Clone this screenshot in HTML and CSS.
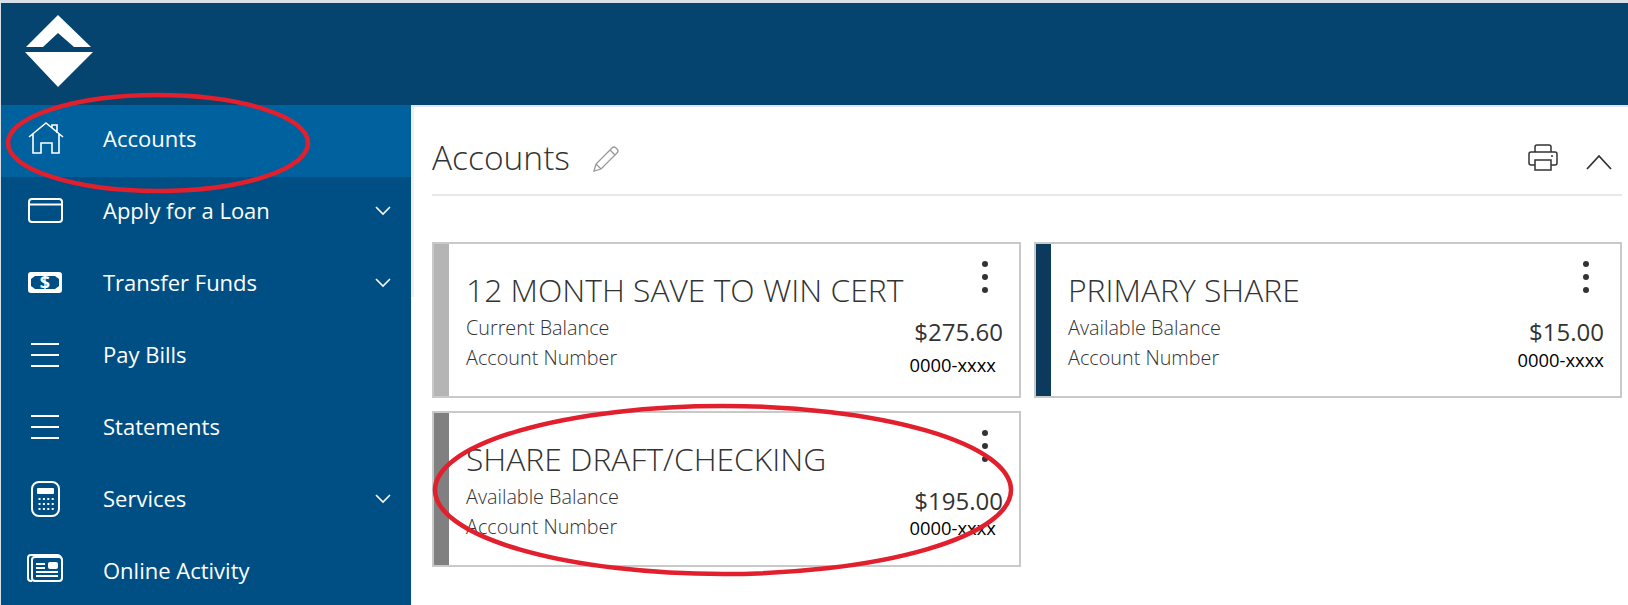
FILE: index.html
```html
<!DOCTYPE html>
<html lang="en">
  <head>
    <meta charset="UTF-8" />
    <title>Accounts</title>
    <link rel="stylesheet" href="styles.css">
  </head>
  <body>
    <header class="topbar">
      <svg class="logo" width="70" height="76" viewBox="0 0 70 76">
        <path fill="#fff" d="M33 0 L66 32 L49 32 L33 18 L18 32 L1 32 Z" />
        <path fill="#fff" d="M0 37 L68 37 L33 72 Z" />
      </svg>
    </header>

    <div class="layout">
      <nav class="sidebar">
        <a href="#" class="nav-item active">
          <svg class="nav-icon thin" viewBox="0 0 38 38"><path d="M2 17 L19 3 L36 17 M25 8 V5 H30 V13 M6 14 V33 H14 V23 H25 V33 H32 V14" /></svg>
          <span class="nav-label">Accounts</span>
        </a>
        <a href="#" class="nav-item">
          <svg class="nav-icon" viewBox="0 0 38 38"><rect x="2" y="7" width="33" height="23" rx="3" /><path d="M2 12.5 H35" /></svg>
          <span class="nav-label">Apply for a Loan</span>
          <svg class="chevron" viewBox="0 0 18 12"><path d="M2 2 L9 9 L16 2" /></svg>
        </a>
        <a href="#" class="nav-item">
          <svg class="nav-icon" viewBox="0 0 38 38"><rect class="solid" x="1" y="8" width="34" height="21" rx="3" /><path class="cutout" d="M8 12 H28 L32 15 V22 L28 25 H8 L4 22 V15 Z" /><text class="money" x="18" y="24.5" text-anchor="middle">$</text></svg>
          <span class="nav-label">Transfer Funds</span>
          <svg class="chevron" viewBox="0 0 18 12"><path d="M2 2 L9 9 L16 2" /></svg>
        </a>
        <a href="#" class="nav-item">
          <svg class="nav-icon" viewBox="0 0 38 38"><path d="M4 8 H32 M4 19 H32 M4 30 H32" /></svg>
          <span class="nav-label">Pay Bills</span>
        </a>
        <a href="#" class="nav-item">
          <svg class="nav-icon" viewBox="0 0 38 38"><path d="M4 8 H32 M4 19 H32 M4 30 H32" /></svg>
          <span class="nav-label">Statements</span>
        </a>
        <a href="#" class="nav-item">
          <svg class="nav-icon" viewBox="0 0 38 38"><rect x="5" y="2" width="27" height="34" rx="7" /><rect class="solid" x="10" y="8" width="17" height="6" rx="1" /><path class="keys" d="M11.5 19 H27 M11.5 24 H27 M11.5 29 H27" /></svg>
          <span class="nav-label">Services</span>
          <svg class="chevron" viewBox="0 0 18 12"><path d="M2 2 L9 9 L16 2" /></svg>
        </a>
        <a href="#" class="nav-item">
          <svg class="nav-icon" viewBox="0 0 38 38"><rect x="5" y="5" width="30" height="24" rx="3" /><path d="M5 29 H4 A3 3 0 0 1 1 26 V6 A3 3 0 0 1 4 3 H30 A4 4 0 0 1 34 6 M9 12 H18 M9 16 H18 M9 20 H31 M9 24 H31" /><rect class="solid" x="21" y="10" width="10" height="7" rx="2" /></svg>
          <span class="nav-label">Online Activity</span>
        </a>
      </nav>

      <main class="content">
        <div class="page-head">
          <h1>Accounts</h1>
          <svg class="pencil" width="28" height="28" viewBox="0 0 28 28"><path d="M2 26 L4 19 L20 3 Q22 1 24 3 L25 4 Q27 6 25 8 L9 24 Z M4 19 L9 24 M18 5 L23 10" /></svg>
          <div class="head-actions">
            <svg class="print" width="30" height="28" viewBox="0 0 30 28"><path d="M7 8 V3 A2 2 0 0 1 9 1 H21 A2 2 0 0 1 23 3 V8 M7 21 H3 A2 2 0 0 1 1 19 V10 A2 2 0 0 1 3 8 H27 A2 2 0 0 1 29 10 V19 A2 2 0 0 1 27 21 H23 M7 16 H23 V26 H7 Z" /><circle cx="24" cy="12" r="1" /></svg>
            <svg class="collapse" width="26" height="16" viewBox="0 0 26 16"><path d="M1 15 L13 2 L25 15" /></svg>
          </div>
        </div>

        <div class="cards">
          <article class="card">
            <div class="card-bar bar-light"></div>
            <div class="card-body">
              <div class="card-info">
                <h2>12 MONTH SAVE TO WIN CERT</h2>
                <p>Current Balance</p>
                <p>Account Number</p>
              </div>
              <div class="card-side">
                <div class="dots"><i></i><i></i><i></i></div>
                <div class="amount">$275.60</div>
                <div class="acct-no inset low">0000-xxxx</div>
              </div>
            </div>
          </article>

          <article class="card">
            <div class="card-bar bar-navy"></div>
            <div class="card-body">
              <div class="card-info">
                <h2>PRIMARY SHARE</h2>
                <p>Available Balance</p>
                <p>Account Number</p>
              </div>
              <div class="card-side">
                <div class="dots"><i></i><i></i><i></i></div>
                <div class="amount">$15.00</div>
                <div class="acct-no">0000-xxxx</div>
              </div>
            </div>
          </article>

          <article class="card">
            <div class="card-bar bar-grey"></div>
            <div class="card-body">
              <div class="card-info">
                <h2>SHARE DRAFT/CHECKING</h2>
                <p>Available Balance</p>
                <p>Account Number</p>
              </div>
              <div class="card-side">
                <div class="dots"><i></i><i></i><i></i></div>
                <div class="amount">$195.00</div>
                <div class="acct-no inset">0000-xxxx</div>
              </div>
            </div>
          </article>
        </div>
      </main>
    </div>

    <svg class="marks" width="1628" height="605" viewBox="0 0 1628 605">
      <ellipse cx="158" cy="143" rx="150" ry="48" />
      <ellipse cx="723" cy="490" rx="288" ry="84" />
    </svg>
  </body>
</html>
```

FILE: styles.css
```css
* {
  margin: 0;
  padding: 0;
  box-sizing: border-box;
  font-family: "Open Sans", "Liberation Sans", sans-serif;
}

html, body {
  height: 605px;
  overflow: hidden;
}

body {
  position: relative;
  background-color: #fff;
  border-top: 3px solid #d7e0e8;
  border-left: 1px solid #d7e0e8;
  color: #333;
}

.topbar {
  height: 102px;
  background-color: #04446e;
  padding: 12px 0 0 24px;
}

.logo {
  display: block;
}

.layout {
  display: flex;
  height: 500px;
}

.sidebar {
  width: 410px;
  flex-shrink: 0;
  background-color: #004f84;
}

.nav-item {
  display: flex;
  align-items: center;
  height: 72px;
  padding: 0 19px 4px 26px;
  color: white;
  text-decoration: none;
  font-size: 22px;
}

.nav-item.active {
  background-color: #00619f;
}

.nav-icon {
  width: 38px;
  height: 38px;
  margin-right: 38px;
  fill: none;
  stroke: white;
  stroke-width: 2;
}

.nav-icon.thin {
  stroke-width: 1.6;
}

.nav-icon .solid {
  fill: white;
  stroke: none;
}

.nav-icon .cutout {
  fill: #004f84;
  stroke: none;
}

.nav-icon .keys {
  stroke-dasharray: 2 2.4;
}

.nav-icon .money {
  fill: white;
  stroke: none;
  font-size: 18px;
  font-weight: 700;
}

.nav-label {
  flex: 1;
  margin-bottom: 2px;
}

.chevron {
  width: 18px;
  height: 12px;
  fill: none;
  stroke: white;
  stroke-width: 1.6;
}

.content {
  flex: 1;
  padding: 0 6px 0 21px;
  border-top: 2px solid #dbe6ee;
  background: linear-gradient(#eef1f3, #eef1f3) no-repeat 0 0 / 3px 190px;
}

.page-head {
  display: flex;
  align-items: center;
  height: 89px;
  border-bottom: 2px solid #e6e8ea;
  padding-top: 17px;
}

.page-head h1 {
  font-size: 33.5px;
  font-weight: 300;
  color: #333;
  margin-bottom: 4px;
}

.pencil {
  margin-left: 22px;
  fill: none;
  stroke: #999;
  stroke-width: 1.3;
}

.head-actions {
  margin-left: auto;
  display: flex;
  align-items: center;
  gap: 28px;
  padding-right: 10px;
}

.print {
  fill: none;
  stroke: #333;
  stroke-width: 1.5;
  margin-bottom: 2px;
}

.print circle {
  fill: #333;
  stroke: none;
}

.collapse {
  fill: none;
  stroke: #333;
  stroke-width: 1.8;
  margin-top: 6px;
}

.cards {
  display: grid;
  grid-template-columns: 589px 588px;
  grid-auto-rows: 156px;
  gap: 13px;
  margin-top: 46px;
}

.card {
  display: flex;
  border: 2px solid #c9c9c9;
  background-color: white;
}

.card-bar {
  width: 15px;
  flex-shrink: 0;
}

.bar-light { background-color: #b5b5b5; }
.bar-navy { background-color: #0c3a5c; }
.bar-grey { background-color: #808080; }

.card-body {
  flex: 1;
  display: flex;
  justify-content: space-between;
  padding: 16px 16px 0 17px;
}

.card-info h2 {
  font-size: 31.8px;
  font-weight: 300;
  line-height: 44px;
  margin-top: 8px;
  margin-bottom: 1px;
  color: #333;
}

.card-info p {
  font-size: 19.8px;
  font-weight: 300;
  line-height: 30px;
  color: #333;
}

.card-side {
  display: flex;
  flex-direction: column;
  align-items: flex-end;
}

.dots {
  display: flex;
  flex-direction: column;
  gap: 7px;
  margin-top: 1px;
  margin-right: 15px;
}

.dots i {
  display: block;
  width: 6px;
  height: 6px;
  border-radius: 50%;
  background-color: #333;
}

.amount {
  margin-top: 24px;
  font-size: 24px;
  font-weight: 500;
  line-height: 30px;
  color: #333;
}

.acct-no {
  font-size: 18.4px;
  line-height: 24px;
  margin-top: 1px;
  color: #000;
}

.acct-no.inset {
  margin-top: 0;
  margin-right: 7px;
}

.acct-no.low {
  margin-top: 6px;
}

.marks {
  position: absolute;
  top: -3px;
  left: -1px;
  pointer-events: none;
  fill: none;
  stroke: #e21f2c;
  stroke-width: 4.5;
}
```
